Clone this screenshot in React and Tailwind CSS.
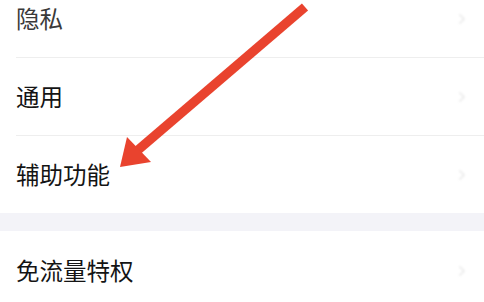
import { ChevronRight } from "lucide-react";

const font = { fontFamily: '"Noto Sans CJK SC", "Noto Sans", sans-serif' };

function Row({ label, height, divider, muted }) {
    return (
        <div className="relative flex items-center justify-between pl-4 pr-[14px]" style={{ height }}>
            <span className={`text-[23.5px] leading-none ${muted ? "text-[#3a3a3a]" : "text-[#141414]"}`}>{label}</span>
            <ChevronRight className="w-4 h-4 text-[#eeeeee] blur-[1px]" strokeWidth={3} />
            {divider && <div className="absolute bottom-0 left-4 right-0 h-px bg-[#eeeeee]" />}
        </div>
    );
}

export default function App() {
    return (
        <div className="relative w-[484px] h-[302px] overflow-hidden bg-white" style={font}>
            <div className="-mt-[21px]">
                <Row label="隐私" height={79} divider muted />
                <Row label="通用" height={78} divider />
                <Row label="辅助功能" height={77} />
                <div className="h-[18px] bg-[#f3f3f8]" />
                <Row label="免流量特权" height={80} />
            </div>

            {/* red annotation arrow */}
            <svg className="absolute inset-0 pointer-events-none" width="484" height="302" viewBox="0 0 484 302">
                <line x1="305" y1="7" x2="138" y2="150" stroke="#e9432e" strokeWidth="9.5" />
                <polygon points="120,167 127,137 151,162" fill="#e9432e" />
            </svg>
        </div>
    );
}
